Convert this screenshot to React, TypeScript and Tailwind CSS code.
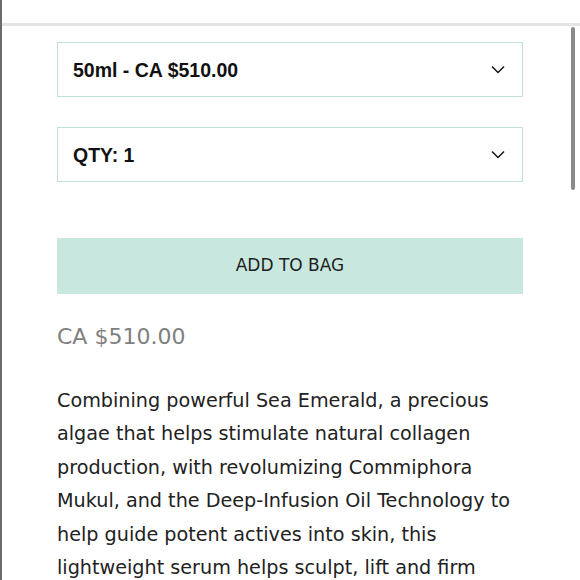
export default function App() {
  return (
    <div className="relative h-[580px] w-[580px] overflow-hidden bg-white border-l-2 border-[#6b6b6b]">
      {/* top bar */}
      <div className="h-[26px] border-b-[3px] border-[#e4e4e4]" />

      {/* scrollbar */}
      <div className="absolute right-[5px] top-[27px] h-[163px] w-[4px] rounded-full bg-[#8a8a8a]" />

      <div className="pl-[55px] pr-[57px] pt-[16px]">
        <div className="flex flex-col gap-[30px]">
          <Select label="50ml - CA $510.00" />
          <Select label="QTY: 1" />
        </div>

        <button className="mt-[56px] flex h-[56px] w-full items-center justify-center bg-[#c8e8df] text-[17px] text-[#1f1f1f] font-['DejaVu_Sans',sans-serif]">
          ADD TO BAG
        </button>

        <div className="mt-[28px] text-[22px] leading-[30px] text-[#808080] font-['DejaVu_Sans',sans-serif]">
          CA $510.00
        </div>

        <p className="mt-[32px] w-[462px] text-[19.2px] leading-[33.4px] text-[#222] font-['DejaVu_Sans',sans-serif]">
          Combining powerful Sea Emerald, a precious algae that helps stimulate natural collagen production, with revolumizing Commiphora Mukul, and the Deep-Infusion Oil Technology to help guide potent actives into skin, this lightweight serum helps sculpt, lift and firm skin for a more youthful look.
        </p>
      </div>
    </div>
  )
}

function Select({ label }: { label: string }) {
  return (
    <div className="flex h-[55px] items-center justify-between border border-[#bfe2d8] pl-[15px] pr-[17px] pt-[3px]">
      <span className="text-[19.5px] font-bold text-[#111] font-['Liberation_Sans',Arial,sans-serif]">{label}</span>
      <svg width="14" height="9" viewBox="0 0 14 9" fill="none" className="-mt-[3px]">
        <path d="M1 1.5l6 6 6-6" stroke="#111" strokeWidth="1.5" />
      </svg>
    </div>
  )
}
